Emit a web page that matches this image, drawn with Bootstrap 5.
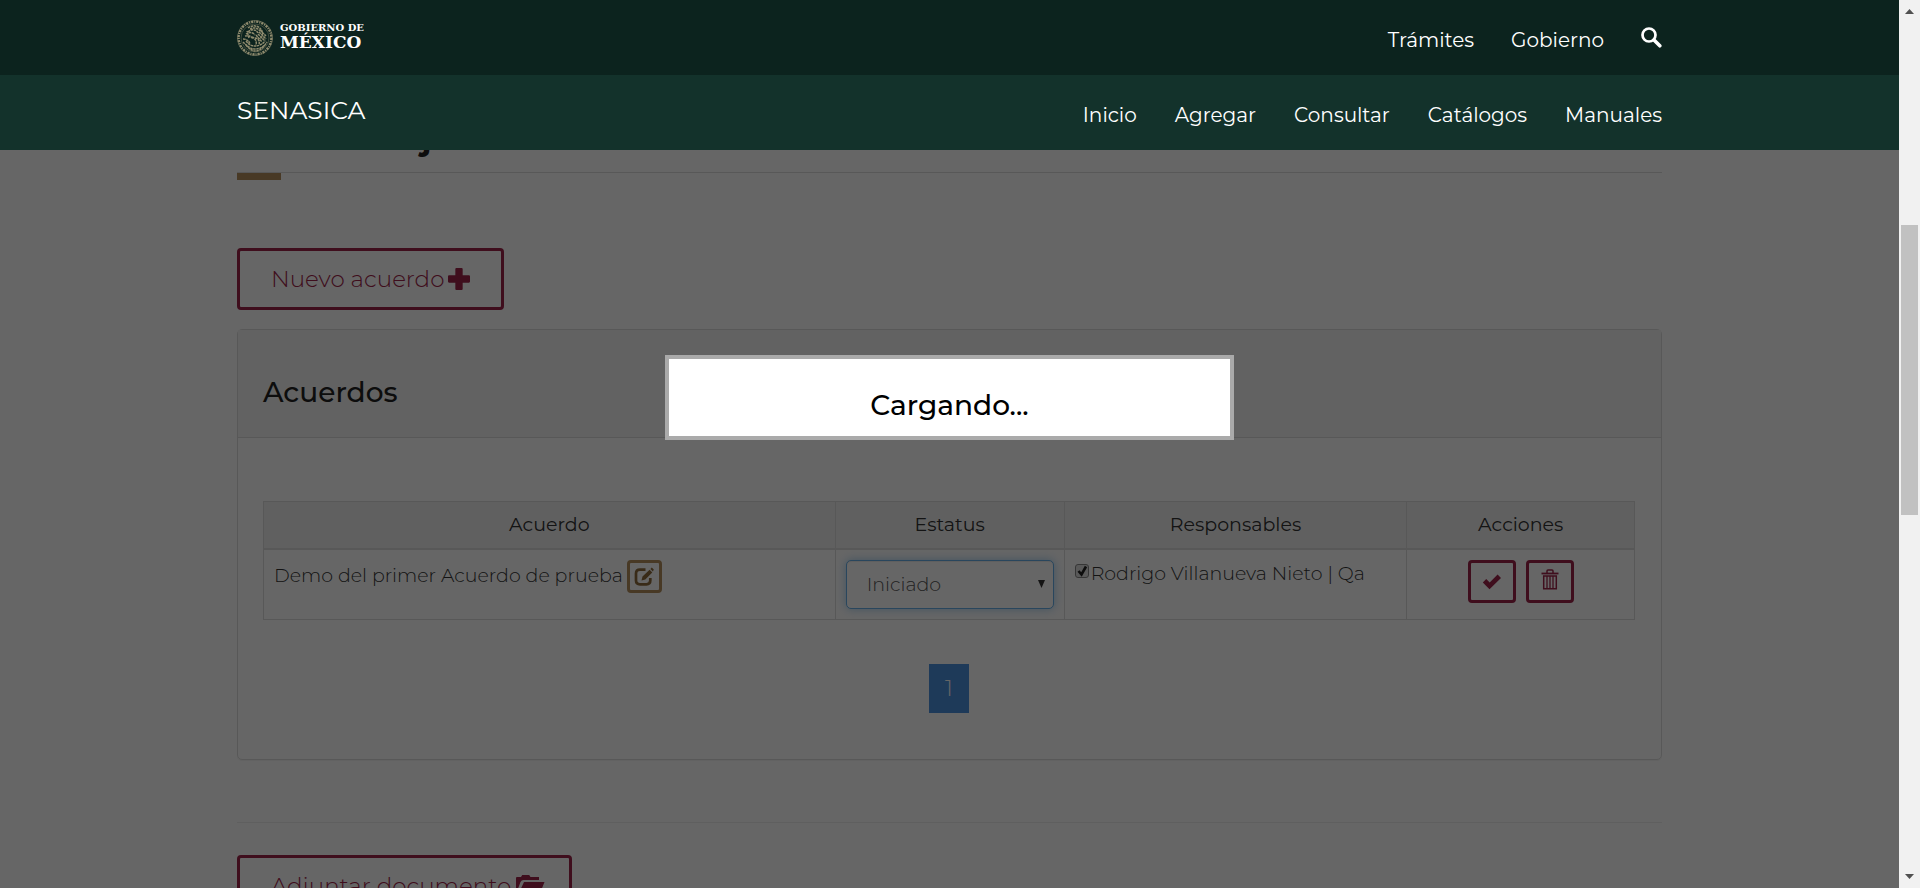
<!DOCTYPE html>
<html lang="es">
<head>
<meta charset="utf-8">
<meta name="viewport" content="width=device-width, initial-scale=1">
<title>SENASICA</title>
<link rel="stylesheet" href="https://cdn.jsdelivr.net/npm/bootstrap@5.3.0/dist/css/bootstrap.min.css">
<style>
:root{--guinda:#9d2449;--oro:#b38e5d}
body{font-family:Montserrat,Inter,"Open Sans",sans-serif;font-size:19px;font-weight:300;color:#333;line-height:28px}
.wrap{width:100%;max-width:1425px;margin:0 auto}
.bar-top,.bar-sub{height:75px}
.bar-top{background:#0c231e}
.bar-sub{background:#13322b}
.site-link{color:#fff;font-size:20px;font-weight:400;line-height:30px;text-decoration:none}
.menu{gap:38px;padding-top:4px}
.bar-top .menu{gap:37px}
.brand-name{color:#fff;font-size:25px;font-weight:400;line-height:30px;text-decoration:none;padding-bottom:6px}
.logo-text{font-family:"DejaVu Serif","Liberation Serif",serif;font-weight:700;color:#fff;margin-left:7px}
.logo-text .l1{font-size:10px;line-height:10px}
.logo-text .l2{font-size:17px;line-height:19px}
.page-title{font-size:34px;line-height:42px;font-weight:700;color:#222;margin:-33px 0 0;padding-bottom:13px;border-bottom:1px solid #ddd}
.gold-rule{width:44px;height:7px;background:var(--oro)}
.btn-guinda,.btn-oro{border:3px solid var(--guinda);border-radius:4px;color:var(--guinda);background:#fff}
.btn-oro{border-color:var(--oro);color:#8e6c3c}
.btn-big{font-size:23px;font-weight:300;line-height:32px;padding:12px 31px;gap:4px}
.btn-new{margin-top:68px}
.btn-sq{width:48px;height:43px}
.btn-edit{width:35px;height:33px}
.panel-box{border:1px solid #ddd;border-radius:5px;box-shadow:0 1px 1px rgba(0,0,0,.05);margin-top:19px}
.panel-top{background:#f5f5f5;border-bottom:1px solid #ddd;padding:45px 25px 27px}
.panel-top h2{font-size:28px;line-height:35px;font-weight:500;color:#222;margin:0}
.panel-main{padding:63px 26px 46px 25px}
.grid-table{table-layout:fixed;margin:0;color:#333;border-color:#ddd}
.grid-table>:not(caption)>*>*{padding:10px;vertical-align:top;border-width:1px}
.grid-table thead th{background:#f1f1f1;font-weight:400;text-align:center;line-height:26px;font-size:19px;border-bottom-width:2px}
.w-a{width:41.7%}.w-b{width:16.7%}.w-c{width:25%}
.agreement{padding-top:2px}
.status-select{appearance:none;width:100%;height:49px;padding:0 20px;border:1px solid #66afe9;border-radius:5px;color:#555;background:#fff;font-size:19px;font-weight:300;box-shadow:inset 0 1px 1px rgba(0,0,0,.075),0 0 10px rgba(102,175,233,.6);outline:0}
.select-arrow{right:9px;top:20px;pointer-events:none}
.tick{appearance:none;width:14px;height:14px;border:1px solid #888;border-radius:3px;background:#dedede;margin:0;flex:none}
.tick-mark{left:1px;top:0;pointer-events:none}
.people{gap:2px}
.pair{gap:10px}
.pager{margin-top:44px}
.page-current{width:40px;height:49px;background:#4d92df;color:#fff;font-size:22px;text-decoration:none}
.sep{border:0;border-top:1px solid #eee;opacity:1;margin:62px 0 32px}
.shade{background:rgba(0,0,0,.6)}
.loading{left:35%;top:40vh;width:30%;background:#fff;border:4px solid #aaa;color:#000;text-align:center;padding:29px 0 13px}
.loading h3{font-size:28px;line-height:35px;font-weight:500;margin:0}
.scroller{width:21px;background:#f1f1f1;padding:9px 2px}
.scroller-thumb{background:#c1c1c1;height:290px;margin-top:211px}
</style>
</head>
<body>
<div class="d-flex vh-100 overflow-hidden">
<div class="position-relative flex-grow-1 d-flex flex-column overflow-hidden">
<header class="position-relative z-3 flex-shrink-0">
<nav class="bar-top" aria-label="Gobierno"><div class="wrap h-100 d-flex justify-content-between align-items-center">
<a href="#" class="d-flex align-items-center text-decoration-none">
<svg width="36" height="36" viewBox="0 0 36 36" fill="none" stroke="#8f8b6e" aria-hidden="true">
<circle cx="18" cy="18" r="16.4" stroke-width="2.4" stroke-dasharray="2.2 1 1.1 .9"/><circle cx="18" cy="18" r="17.5" stroke-width=".5"/><circle cx="18" cy="18" r="14" stroke-width=".4"/>
<path stroke-width="1.5" stroke-dasharray="2.5 .6" d="M11 8c5-4 12-2 14 3 1 3 0 6-2 8M13 9c4-2 8-1 10 2M11 12c3-3 8-3 10 1M9 14c3-2 7-2 9 1M8 16c4-1 6 0 8 3M23 10l6 6M22 12l7 7M21 14l7 7M19 15l6 7M6 19c4 0 6 2 7 5M6 22c3 3 7 7 12 7s9-2 12-7M9 21c3 4 6 5 9 5s7-1 10-5M15 17c3 1 5 4 4 8M18 18c3 0 5 3 4 6M12 18l-2-7M9 25c6 8 13 8 19 0"/>
</svg>
<span class="logo-text d-flex flex-column"><span class="l1">GOBIERNO DE</span><span class="l2">MÉXICO</span></span></a>
<div class="menu d-flex align-items-center">
<a class="site-link" href="#">Trámites</a><a class="site-link" href="#">Gobierno</a>
<a class="site-link d-flex pb-1" href="#" aria-label="Buscar"><svg width="21" height="21" viewBox="0 0 21 21" fill="none" stroke="#fff"><circle cx="8" cy="8" r="6.5" stroke-width="2.7"/><path d="M13 13l5.800 5.800" stroke-width="3.600" stroke-linecap="round"/></svg></a>
</div></div></nav>
<nav class="bar-sub" aria-label="Principal"><div class="wrap h-100 d-flex justify-content-between align-items-center">
<a class="brand-name" href="#">SENASICA</a>
<div class="menu d-flex"><a class="site-link" href="#">Inicio</a><a class="site-link" href="#">Agregar</a><a class="site-link" href="#">Consultar</a><a class="site-link" href="#">Catálogos</a><a class="site-link" href="#">Manuales</a></div>
</div></nav>
</header>
<main class="flex-grow-1 overflow-hidden"><div class="wrap">
<h1 class="page-title">Acta trabajo</h1>
<div class="gold-rule"></div>
<button type="button" class="btn-guinda btn-big btn-new d-flex align-items-center">Nuevo acuerdo <svg width="22" height="22" viewBox="0 0 21 21" fill="currentColor"><path d="M8 0h5q1 0 1 1v6h6q1 0 1 1v5q0 1-1 1h-6v6q0 1-1 1H8q-1 0-1-1v-6H1q-1 0-1-1V8q0-1 1-1h6V1q0-1 1-1z"/></svg></button>
<section class="panel-box">
<div class="panel-top"><h2>Acuerdos</h2></div>
<div class="panel-main">
<table class="table table-bordered grid-table">
<thead><tr><th class="w-a" scope="col">Acuerdo</th><th class="w-b" scope="col">Estatus</th><th class="w-c" scope="col">Responsables</th><th scope="col">Acciones</th></tr></thead>
<tbody><tr>
<td><div class="d-flex gap-1"><span class="agreement">Demo del primer Acuerdo de prueba</span>
<button type="button" class="btn-oro btn-edit p-0 d-flex align-items-center justify-content-center" aria-label="Editar"><svg width="20" height="20" viewBox="0 0 20 20"><path d="M11.500 2.700H6Q2 2.700 2 6.500v7Q2 17.300 6 17.300h6.500Q16.300 17.300 16.300 13.500V11" fill="none" stroke="currentColor" stroke-width="2.700"/><path d="M7.500 13.500l1-4L15.600 2.800l2.700 2.600-7 7zM16.400 2l1.400-1.400 2 2L18.900 4.400z" fill="currentColor"/></svg></button></div></td>
<td><div class="position-relative"><select class="status-select d-block" aria-label="Estatus"><option>Iniciado</option></select><svg class="select-arrow position-absolute" width="7" height="8" viewBox="0 0 8 8" preserveAspectRatio="none"><path d="M0 0h8L4 8z" fill="#333"/></svg></div></td>
<td><div class="people d-flex"><span class="position-relative d-flex align-items-start pt-1"><input class="tick" type="checkbox" id="resp" checked><svg class="tick-mark position-absolute mt-1" width="13" height="14" viewBox="0 0 13 14"><path d="M2.500 7l3 3.500L10 2.500" fill="none" stroke="#222" stroke-width="2.600"/></svg></span><label for="resp">Rodrigo Villanueva Nieto | Qa</label></div></td>
<td><div class="pair d-flex justify-content-center">
<button type="button" class="btn-guinda btn-sq p-0 d-flex align-items-center justify-content-center" aria-label="Concluir"><svg width="20" height="18" viewBox="0 0 20 18"><path d="M.8 9.500l3.400-3.400 3.500 3.400L15.600 1.500 19 5 7.500 16.300z" fill="currentColor"/></svg></button>
<button type="button" class="btn-guinda btn-sq p-0 pb-1 d-flex align-items-center justify-content-center" aria-label="Eliminar"><svg width="18" height="21" viewBox="0 0 18 21" fill="none" stroke="currentColor"><path d="M.5 4.500h17" stroke-width="1.800"/><path d="M6 4V2Q6 1 7 1h4Q12 1 12 2v2" stroke-width="1.500"/><path d="M2.700 7v12.800h12.600V7z" stroke-width="1.500"/><path d="M6 7v13M9 7v13M12 7v13" stroke-width="1.300"/></svg></button>
</div></td>
</tr></tbody></table>
<nav aria-label="Páginas" class="pager d-flex justify-content-center"><a href="#" class="page-current d-flex align-items-center justify-content-center">1</a></nav>
</div></section>
<hr class="sep">
<button type="button" class="btn-guinda btn-big d-flex align-items-center">Adjuntar documento <svg class="overflow-visible" width="23" height="24" viewBox="0 0 23 24" fill="currentColor"><path d="M1 20V4Q1 3 2 3h4l1.200-2h7L15.500 3H24v3H8.500Q6.500 6 5.500 8z"/><path d="M9 8h20.500l-5 12.500q-.5 1.500-2 1.500H2.500z"/></svg></button>
</div></main>
<div class="shade position-absolute top-0 start-0 w-100 h-100 z-1"></div>
<div class="loading position-absolute z-3" role="status"><h3>Cargando...</h3></div>
</div>
<div class="scroller d-flex flex-column align-items-center flex-shrink-0" aria-hidden="true">
<svg width="9" height="5" viewBox="0 0 9 5"><path d="M0 5h9L4.500 0z" fill="#505050"/></svg>
<div class="scroller-thumb align-self-stretch"></div>
<svg class="mt-auto" width="9" height="5" viewBox="0 0 9 5"><path d="M0 0h9L4.500 5z" fill="#505050"/></svg>
</div>
</div>
<script src="https://cdn.jsdelivr.net/npm/bootstrap@5.3.0/dist/js/bootstrap.bundle.min.js"></script>
</body>
</html>
